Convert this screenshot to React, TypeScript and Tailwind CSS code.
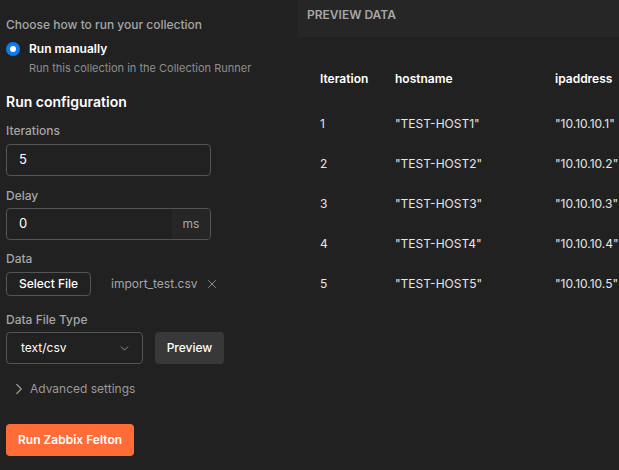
import { ChevronDown, ChevronRight, X } from "lucide-react";

const rows = [
  { i: 1, host: '"TEST-HOST1"', ip: '"10.10.10.1"' },
  { i: 2, host: '"TEST-HOST2"', ip: '"10.10.10.2"' },
  { i: 3, host: '"TEST-HOST3"', ip: '"10.10.10.3"' },
  { i: 4, host: '"TEST-HOST4"', ip: '"10.10.10.4"' },
  { i: 5, host: '"TEST-HOST5"', ip: '"10.10.10.5"' },
];

export default function App() {
  return (
    <main
      className="w-[619px] h-[470px] bg-[#212121] flex overflow-hidden text-[#e6e6e6]"
      style={{ fontFamily: "Inter, 'Noto Sans', sans-serif" }}
    >
      {/* Left: run settings */}
      <div className="w-[298px] shrink-0 pl-[6px] pt-[17px]">
        <p className="text-[12px] font-medium text-[#a6a6a6] leading-[16px]">Choose how to run your collection</p>

        <div className="flex items-start gap-[9px] mt-[8px]">
          <span className="mt-[1px] w-[14px] h-[14px] rounded-full bg-[#0f7bf0] flex items-center justify-center">
            <span className="w-[6px] h-[6px] rounded-full bg-white" />
          </span>
          <div>
            <p className="text-[12px] font-semibold text-white leading-[16px]">Run manually</p>
            <p className="text-[11px] text-[#8f8f8f] leading-[16px] mt-[3px]">Run this collection in the Collection Runner</p>
          </div>
        </div>

        <h2 className="text-[14px] font-semibold text-white mt-[16px] leading-[20px]">Run configuration</h2>

        <label className="block text-[12px] font-medium text-[#a6a6a6] mt-[11px] leading-[16px]">Iterations</label>
        <div className="mt-[5px] w-[205px] h-[32px] border border-[#555] rounded-[4px] flex items-center px-[12px] text-[13px] text-white">
          5
        </div>

        <label className="block text-[12px] font-medium text-[#a6a6a6] mt-[12px] leading-[16px]">Delay</label>
        <div className="mt-[4px] w-[205px] h-[32px] border border-[#555] rounded-[4px] flex overflow-hidden text-[13px]">
          <div className="flex-1 flex items-center px-[12px] text-white">0</div>
          <div className="w-[38px] bg-[#262626] flex items-center justify-center text-[12px] text-[#a6a6a6]">ms</div>
        </div>

        <label className="block text-[12px] font-medium text-[#a6a6a6] mt-[11px] leading-[16px]">Data</label>
        <div className="mt-[5px] flex items-center">
          <button className="w-[85px] h-[24px] border border-[#555] rounded-[4px] text-[12px] font-medium text-white">
            Select File
          </button>
          <span className="ml-[20px] text-[12px] text-[#a6a6a6]">import_test.csv</span>
          <X className="ml-[7px] w-[14px] h-[14px] text-[#a6a6a6]" strokeWidth={1.4} />
        </div>

        <label className="block text-[12px] font-medium text-[#a6a6a6] mt-[16px] leading-[16px]">Data File Type</label>
        <div className="mt-[4px] flex items-center gap-[12px]">
          <div className="w-[137px] h-[32px] border border-[#555] rounded-[4px] flex items-center justify-between pl-[14px] pr-[11px] text-[12px] text-white">
            text/csv
            <ChevronDown className="w-[13px] h-[13px] text-[#a6a6a6]" strokeWidth={1.5} />
          </div>
          <button className="w-[69px] h-[32px] rounded-[4px] bg-[#383838] text-[12px] font-medium text-white">Preview</button>
        </div>

        <div className="mt-[17px] h-[16px] flex items-center text-[12px] text-[#9a9a9a]">
          <ChevronRight className="ml-[4px] w-[18px] h-[18px]" strokeWidth={1.6} />
          <span className="ml-[2px]">Advanced settings</span>
        </div>

        <button className="mt-[27px] w-[128px] h-[32px] rounded-[4px] bg-[#ff6c37] text-[12px] font-semibold text-white">
          Run Zabbix Felton
        </button>
      </div>

      {/* Right: preview */}
      <div className="flex-1 flex flex-col">
        <div className="h-[37px] bg-[#262626] pl-[9px] pt-[6px] text-[12px] font-semibold text-[#a6a6a6]">
          PREVIEW DATA
        </div>
        <div className="pl-[22px] pt-[32px] text-[12px]">
          <div className="grid grid-cols-[75px_160px_80px] h-[20px] items-center font-semibold text-white">
            <span>Iteration</span>
            <span>hostname</span>
            <span className="whitespace-nowrap">ipaddress</span>
          </div>
          <div className="mt-[25px] flex flex-col gap-[20px]">
            {rows.map((r) => (
              <div key={r.i} className="grid grid-cols-[75px_160px_80px] h-[20px] items-center text-[#e6e6e6]">
                <span>{r.i}</span>
                <span>{r.host}</span>
                <span className="whitespace-nowrap">{r.ip}</span>
              </div>
            ))}
          </div>
        </div>
      </div>
    </main>
  );
}
